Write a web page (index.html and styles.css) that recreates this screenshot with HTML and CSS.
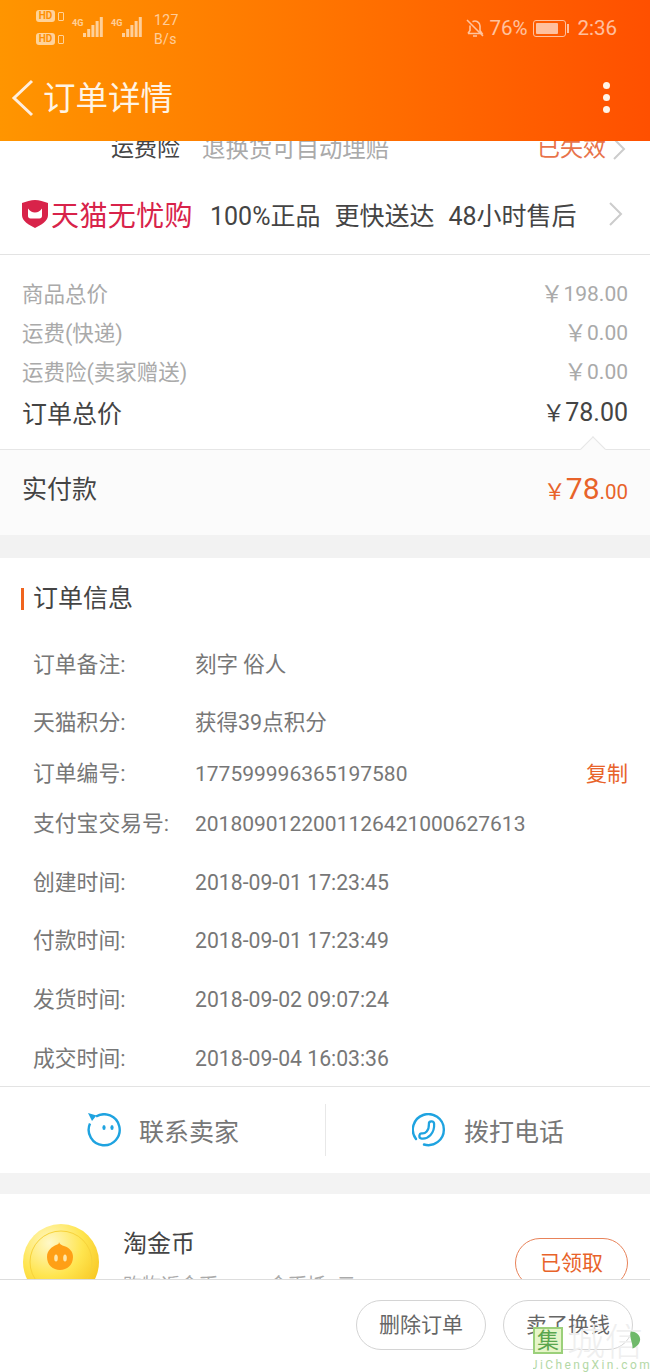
FILE: index.html
```html
<!DOCTYPE html>
<html lang="zh-CN">
<head>
    <meta charset="UTF-8">
    <meta name="viewport" content="width=device-width, initial-scale=1.0">
    <title>订单详情</title>
    <link rel="stylesheet" href="styles.css">
</head>
<body>
<div class="page">
    <header class="header">
        <div class="status">
            <div class="status-left">
                <div class="sim-tags">
                    <div class="sim-tag"><span class="hd">HD</span><span class="hd-bar"></span></div>
                    <div class="sim-tag"><span class="hd">HD</span><span class="hd-bar"></span></div>
                </div>
                <div class="signal"><span class="net">4G</span>
                    <svg width="20" height="20" viewBox="0 0 20 20"><g fill="#fff"><rect x="0" y="16" width="3" height="4"/><rect x="4.200" y="12" width="3" height="8"/><rect x="8.400" y="8" width="3" height="12"/><rect x="12.600" y="4" width="3" height="16"/><rect x="16.800" y="0" width="3" height="20"/></g></svg>
                </div>
                <div class="signal"><span class="net">4G</span>
                    <svg width="20" height="20" viewBox="0 0 20 20"><g fill="#fff"><rect x="0" y="16" width="3" height="4"/><rect x="4.200" y="12" width="3" height="8"/><rect x="8.400" y="8" width="3" height="12"/><rect x="12.600" y="4" width="3" height="16"/><rect x="16.800" y="0" width="3" height="20"/></g></svg>
                </div>
                <div class="speed">127<br>B/s</div>
            </div>
            <div class="status-right">
                <svg width="20" height="20" viewBox="0 0 20 20" fill="none" stroke="#fff" stroke-width="1.600"><path d="M3 15.500h14l-2-3V8a5 5 0 0 0-7.500-4.300M5 7.500v5l-2 3M8 18h4M2 2l16 16"/></svg>
                <span class="pct">76%</span>
                <span class="battery"><span class="battery-fill"></span></span>
                <span class="battery-tip"></span>
                <span class="clock">2:36</span>
            </div>
        </div>
        <div class="title-bar">
            <svg class="back" width="23" height="38" viewBox="0 0 23 38" fill="none" stroke="#ffeedd" stroke-width="3"><path d="M21 2 3 19l18 17"/></svg>
            <h1 class="title">订单详情</h1>
            <div class="more"><i></i><i></i><i></i></div>
        </div>
    </header>

    <div class="insure">
        <span class="insure-name">运费险</span>
        <span class="insure-desc">退换货可自动理赔</span>
        <span class="insure-state">已失效</span>
        <svg width="13" height="22" viewBox="0 0 13 22" fill="none" stroke="#ccc" stroke-width="2"><path d="m1 1 10 10L1 21"/></svg>
    </div>

    <div class="promise">
        <svg class="shield" width="26" height="28" viewBox="0 0 26 28"><path fill="#d8234a" d="M13 0c4 0 9 1.500 13 3v12c0 6-7 10-13 13C7 25 0 21 0 15V3c4-1.500 9-3 13-3z"/><path fill="#fff" d="M6 8.500c2 2.500 4 4 7 4s5-1.500 7-4V16c0 1.500-1 2.500-2.500 2.500h-9C7 18.500 6 17.500 6 16z"/></svg>
        <span class="tmall">天猫无忧购</span>
        <span class="promise-item first">100%正品</span>
        <span class="promise-item">更快送达</span>
        <span class="promise-item">48小时售后</span>
        <svg class="promise-arrow" width="14" height="24" viewBox="0 0 14 24" fill="none" stroke="#ccc" stroke-width="2"><path d="m1 1 11 11L1 23"/></svg>
    </div>

    <section class="prices">
        <div class="price-row"><span class="price-label">商品总价</span><span class="amount"><span class="yen">￥</span>198.00</span></div>
        <div class="price-row"><span class="price-label">运费(快递)</span><span class="amount"><span class="yen">￥</span>0.00</span></div>
        <div class="price-row"><span class="price-label">运费险(卖家赠送)</span><span class="amount"><span class="yen">￥</span>0.00</span></div>
        <div class="price-row price-total"><span class="price-label">订单总价</span><span class="amount"><span class="yen">￥</span>78.00</span></div>
        <span class="notch"></span>
    </section>
    <section class="paid">
        <span class="paid-label">实付款</span>
        <span class="paid-amount"><span class="paid-yen">￥</span><span class="paid-int">78</span><span class="paid-dec">.00</span></span>
    </section>

    <section class="info">
        <h2 class="info-title">订单信息</h2>
        <div class="info-row"><span class="info-label">订单备注:</span><span class="info-text">刻字 俗人</span></div>
        <div class="info-row gap-28"><span class="info-label">天猫积分:</span><span class="info-text">获得39点积分</span></div>
        <div class="info-row gap-21"><span class="info-label">订单编号:</span><span>177599996365197580</span><span class="copy">复制</span></div>
        <div class="info-row gap-20"><span class="info-label">支付宝交易号:</span><span>2018090122001126421000627613</span></div>
        <div class="info-row"><span class="info-label">创建时间:</span><span class="info-date">2018-09-01 17:23:45</span></div>
        <div class="info-row gap-28"><span class="info-label">付款时间:</span><span class="info-date">2018-09-01 17:23:49</span></div>
        <div class="info-row"><span class="info-label">发货时间:</span><span class="info-date">2018-09-02 09:07:24</span></div>
        <div class="info-row"><span class="info-label">成交时间:</span><span class="info-date">2018-09-04 16:03:36</span></div>
    </section>

    <section class="contact">
        <div class="contact-item">
            <svg width="34" height="34" viewBox="0 0 34 34" fill="none" stroke="#1fa3e0" stroke-width="2.400"><path d="M9 3.600A15.500 15.500 0 1 1 3 10.500"/><path fill="#1fa3e0" stroke="none" d="M1 0l8.500 2.500L5 8z"/><ellipse cx="17" cy="14.500" rx="1.600" ry="2.600" fill="#1fa3e0" stroke="none"/><ellipse cx="25" cy="14.500" rx="1.600" ry="2.600" fill="#1fa3e0" stroke="none"/></svg>
            <span>联系卖家</span>
        </div>
        <div class="contact-item with-line">
            <svg width="34" height="34" viewBox="0 0 34 34" fill="none"><path stroke="#1fa3e0" stroke-width="2.400" stroke-linecap="round" d="M4 26A15.500 15.500 0 1 1 12 31.500"/><path stroke="#1fa3e0" stroke-width="7.500" stroke-linecap="round" d="M10 23c4.500.5 10-4 9.500-12"/><path stroke="#fff" stroke-width="3" stroke-linecap="round" d="M10 23c4.500.5 10-4 9.500-12"/></svg>
            <span>拨打电话</span>
        </div>
    </section>

    <section class="coin">
        <svg class="coin-icon" width="76" height="76" viewBox="0 0 76 76"><defs><radialGradient id="coinFill" cx="35%" cy="25%" r="80%"><stop offset="0" stop-color="#fff8c8"/><stop offset="0.55" stop-color="#ffe54f"/><stop offset="1" stop-color="#f7c520"/></radialGradient></defs><circle cx="38" cy="38" r="38" fill="url(#coinFill)"/><circle cx="38" cy="38" r="31" fill="none" stroke="#f7d23a" stroke-width="1"/><path fill="#ff9f16" d="M36 18c1 3 3 3 5 4 6 2 9 6 9 11 0 8-6 13-13 13s-13-5-13-13c0-7 5-10 9-12 2-1 3-1 3-3z"/><ellipse cx="33" cy="34" rx="1.800" ry="3.500" fill="#ffe6a8"/><ellipse cx="42" cy="34" rx="1.800" ry="3.500" fill="#ffe6a8"/></svg>
        <div class="coin-body">
            <div class="coin-name">淘金币</div>
            <div class="coin-desc">购物返金币，100金币抵1元</div>
        </div>
        <span class="coin-btn">已领取</span>
    </section>

    <footer class="footer">
        <span class="foot-btn">删除订单</span>
        <span class="foot-btn">卖了换钱</span>
    </footer>

    <div class="watermark">
        <div class="wm-top">
            <span class="wm-box">集</span>
            <span class="wm-name">城信</span>
            <svg class="wm-leaf" width="12" height="18" viewBox="0 0 14 20"><path fill="#6fb96a" d="M2 0c6 0 11 4 11 9 0 5-4 9-9 11C5 14 0 8 2 0z"/></svg>
        </div>
        <div class="wm-url">JiChengXin.com</div>
    </div>
</div>
</body>
</html>
```

FILE: styles.css
```css
* {
    box-sizing: border-box;
}
body {
    margin: 0;
    background-color: #fff;
    font-family: Roboto, "Noto Sans CJK SC", sans-serif;
}
.page {
    position: relative;
    width: 650px;
    height: 1372px;
    overflow: hidden;
    display: flex;
    flex-direction: column;
}

/* header */
.header {
    flex: none;
    height: 141px;
    background: linear-gradient(90deg, #ff9500 0%, #ff7400 50%, #ff5000 100%);
    color: #fff;
}
.status {
    height: 57px;
    padding: 10px 33px 0 36px;
    display: flex;
    justify-content: space-between;
}
.status-left {
    display: flex;
    align-items: flex-start;
    opacity: .6;
}
.sim-tags {
    width: 35px;
}
.sim-tag {
    height: 23px;
    display: flex;
    align-items: flex-start;
    gap: 3px;
}
.hd {
    width: 19px;
    height: 12px;
    background-color: #fff;
    border-radius: 3px;
    color: #ff9000;
    font-size: 10px;
    font-weight: 700;
    line-height: 12px;
    text-align: center;
}
.hd-bar {
    width: 6px;
    height: 9px;
    margin-top: 2px;
    border: 1px solid #fff;
    border-radius: 1px;
}
.signal {
    width: 39px;
    height: 27px;
    display: flex;
    align-items: flex-end;
    gap: 0;
}
.net {
    align-self: flex-start;
    margin: 8px 0 0 1px;
    width: 11px;
    font-size: 9px;
    line-height: 10px;
    font-weight: 700;
}
.speed {
    margin: 1px 0 0 5px;
    font-size: 14px;
    line-height: 19px;
    letter-spacing: .4px;
}
.status-right {
    height: 36px;
    display: flex;
    align-items: center;
    opacity: .62;
}
.pct {
    margin-left: 4px;
    font-size: 20.500px;
}
.battery {
    width: 33px;
    height: 17px;
    margin-left: 6px;
    padding: 2px;
    border: 1px solid #fff;
    border-radius: 3px;
}
.battery-fill {
    display: block;
    width: 22px;
    height: 100%;
    background-color: #fff;
    border-radius: 1px;
}
.battery-tip {
    width: 2px;
    height: 9px;
    margin-left: 1px;
    background-color: #fff;
}
.clock {
    margin-left: 8px;
    font-size: 20.500px;
}
.title-bar {
    height: 84px;
    padding: 0 40px 0 11px;
    display: flex;
    align-items: center;
}
.back {
    flex: none;
    margin-top: -2px;
}
.title {
    flex: 1;
    margin: 0 0 0 9px;
    font-size: 32.500px;
    font-weight: 400;
    line-height: 40px;
    color: #fff4e4;
}
.more {
    display: flex;
    flex-direction: column;
    gap: 5px;
    margin-top: -3px;
}
.more i {
    display: block;
    width: 7px;
    height: 7px;
    background-color: #fff4e8;
    border-radius: 50%;
}

/* clipped insurance row */
.insure {
    flex: none;
    height: 20px;
    padding: 0 24px 0 111px;
    display: flex;
    align-items: flex-end;
    overflow: hidden;
    font-size: 23px;
    line-height: 24px;
}
.insure-name {
    color: #444;
}
.insure-desc {
    flex: 1;
    margin-left: 22px;
    font-size: 23.400px;
    color: #aaa;
}
.insure-state {
    color: #e8734a;
}
.insure svg {
    flex: none;
    margin: 0 0 1px 7px;
}

.promise {
    flex: none;
    height: 94px;
    padding: 12px 27px 0 22px;
    display: flex;
    align-items: center;
    border-bottom: 1px solid #e3e3e3;
    color: #444;
}
.shield {
    flex: none;
}
.tmall {
    margin-left: 3px;
    font-size: 28px;
    letter-spacing: .4px;
    color: #d8234a;
    white-space: nowrap;
}
.promise-item {
    margin-left: 14px;
    font-size: 25px;
    white-space: nowrap;
}
.promise-item.first {
    margin-left: 17px;
}
.promise-arrow {
    flex: none;
    margin-left: auto;
}

/* prices */
.prices {
    position: relative;
    flex: none;
    height: 195px;
    padding: 19px 22px 0;
    border-bottom: 1px solid #e6e6e6;
}
.price-row {
    height: 39px;
    display: flex;
    justify-content: space-between;
    align-items: center;
    font-size: 21px;
    color: #aaa;
}
.price-label {
    font-size: 21.500px;
    margin-top: -2px;
}
.price-total {
    height: 43px;
    font-size: 25px;
    color: #444;
}
.price-total .price-label {
    font-size: 25px;
}
.amount {
    display: flex;
    align-items: center;
}
.yen {
    margin-top: -3px;
    font-size: 23px;
}
.notch {
    position: absolute;
    right: 48px;
    bottom: -9px;
    width: 18px;
    height: 18px;
    background-color: #fbfbfb;
    border-top: 1px solid #e6e6e6;
    border-left: 1px solid #e6e6e6;
    transform: rotate(45deg);
}
.paid {
    flex: none;
    height: 108px;
    padding: 0 22px 9px;
    display: flex;
    justify-content: space-between;
    align-items: center;
    background-color: #fbfbfb;
    border-bottom: 23px solid #f2f2f2;
    color: #444;
}
.paid-label {
    font-size: 25px;
    margin-top: -3px;
}
.paid-amount {
    display: flex;
    align-items: baseline;
    color: #e8632a;
}
.paid-yen {
    font-size: 22px;
}
.paid-int {
    font-size: 30px;
}
.paid-dec {
    font-size: 20.500px;
}

/* order info */
.info {
    flex: none;
    height: 529px;
    padding: 23px 22px 0 33px;
    border-bottom: 1px solid #e3e3e3;
    font-size: 21px;
    color: #777;
}
.info-title {
    position: relative;
    margin: 0 0 33px;
    font-size: 25px;
    font-weight: 400;
    line-height: 36px;
    color: #444;
}
.info-title::before {
    content: "";
    position: absolute;
    left: -12px;
    top: 7px;
    width: 3px;
    height: 22px;
    background-color: #f0641e;
}
.info-row {
    height: 30px;
    margin-top: 29px;
    display: flex;
    align-items: center;
    line-height: 30px;
    white-space: nowrap;
}
.info-title + .info-row {
    margin-top: 0;
}
.info-row.gap-28 {
    margin-top: 28px;
}
.info-row.gap-21 {
    margin-top: 21px;
}
.info-row.gap-20 {
    margin-top: 20px;
}
.info-label {
    flex: none;
    width: 162px;
    font-size: 21.800px;
}
.info-text {
    font-size: 21.500px;
}
.info-date {
    font-size: 21.200px;
}
.copy {
    margin-left: auto;
    color: #e8632a;
}

/* contact */
.contact {
    flex: none;
    height: 86px;
    display: flex;
    font-size: 25px;
    color: #777;
}
.contact-item {
    flex: 1;
    display: flex;
    align-items: center;
    gap: 18px;
    padding-left: 87px;
}
.with-line {
    position: relative;
}
.with-line::before {
    content: "";
    position: absolute;
    left: 0;
    top: 17px;
    width: 1px;
    height: 52px;
    background-color: #e8e8e8;
}

.coin {
    flex: none;
    height: 106px;
    padding: 30px 22px 0 23px;
    display: flex;
    overflow: hidden;
    border-top: 21px solid #f3f3f3;
}
.coin-icon {
    flex: none;
}
.coin-body {
    flex: 1;
    margin-left: 24px;
}
.coin-name {
    margin-top: 2px;
    font-size: 24px;
    line-height: 36px;
    color: #444;
}
.coin-desc {
    margin-top: 8px;
    font-size: 19px;
    color: #aaa;
    white-space: nowrap;
}
.coin-btn {
    flex: none;
    width: 113px;
    height: 50px;
    margin-top: 14px;
    border: 1px solid #e8835a;
    border-radius: 25px;
    font-size: 21px;
    line-height: 48px;
    text-align: center;
    color: #e8632a;
}

/* bottom bar */
.footer {
    flex: 1;
    padding: 20px 17px 0 0;
    display: flex;
    justify-content: flex-end;
    align-items: flex-start;
    gap: 17px;
    background-color: #fff;
    border-top: 1px solid #ddd;
}
.foot-btn {
    width: 130px;
    height: 50px;
    border: 1px solid #d4d4d4;
    border-radius: 25px;
    font-size: 21px;
    line-height: 48px;
    text-align: center;
    color: #666;
}

/* site watermark over the corner */
.watermark {
    position: absolute;
    left: 533px;
    right: 0;
    bottom: 0;
    height: 48px;
    padding-top: 3px;
    overflow: hidden;
}
.wm-top {
    height: 30px;
    display: flex;
    align-items: flex-start;
}
.wm-box {
    flex: none;
    width: 30px;
    height: 27px;
    background-color: #e6f5c8;
    border: 2px solid #9bd07a;
    font-size: 22px;
    line-height: 23px;
    text-align: center;
    color: #5aa64e;
}
.wm-name {
    margin-left: 4px;
    font-size: 38px;
    line-height: 30px;
    font-weight: 300;
    color: #efefef;
    white-space: nowrap;
}
.wm-leaf {
    flex: none;
    margin: 4px 0 0 -14px;
}
.wm-url {
    margin: 1px 0 0 -2px;
    font-size: 12px;
    line-height: 14px;
    letter-spacing: 2.400px;
    color: #b4d8a6;
    white-space: nowrap;
}
```
